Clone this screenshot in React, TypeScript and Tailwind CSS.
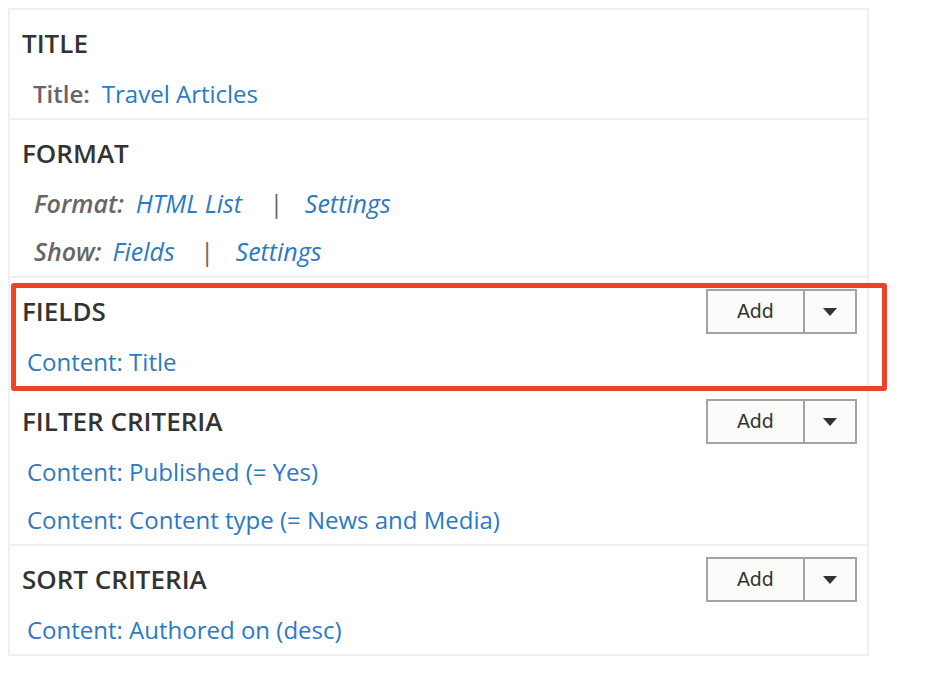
import React from 'react';

const font = { fontFamily: '"Open Sans", "Liberation Sans", sans-serif' };

function AddButton() {
  return (
    <div className="flex h-[45px] border-2 border-[#a3a3a3] bg-[#fbfbf9]">
      <div
        className="flex w-[97px] items-center justify-center border-r-2 border-[#a3a3a3] text-[19px] text-[#333]"
        style={{ fontFamily: '"DejaVu Sans", "Liberation Sans", sans-serif' }}
      >
        Add
      </div>
      <div className="flex w-[50px] items-center justify-center">
        <svg width="14" height="8" viewBox="0 0 14 8">
          <path d="M0 0h14L7 8z" fill="#333" />
        </svg>
      </div>
    </div>
  );
}

function Section({
  title,
  add,
  last,
  children,
}: {
  title: string;
  add?: boolean;
  last?: boolean;
  children: React.ReactNode;
}) {
  return (
    <div className={`pt-[11px] ${last ? '' : 'border-b-2 border-[#f0f0f0]'}`}>
      <div className="flex h-[45px] items-center justify-between pl-[12px] pr-[10px]">
        <h2 className="text-[26px] font-semibold text-[#333]">{title}</h2>
        {add && <AddButton />}
      </div>
      <div className="mt-[4px]">{children}</div>
    </div>
  );
}

function Row({
  children,
  indent = 'pl-[17px]',
  size = 'text-[24px]',
}: {
  children: React.ReactNode;
  indent?: string;
  size?: string;
}) {
  return <div className={`flex h-[48px] items-center ${size} ${indent}`}>{children}</div>;
}

const link = 'text-[#2a7ac4]';
const label = 'font-semibold text-[#666]';

export default function App() {
  return (
    <div className="min-h-[680px] bg-white p-[8px]" style={font}>
      <div className="relative w-[861px] border-2 border-[#f0f0f0]">
        <Section title="TITLE">
          <Row indent="pl-[23px]">
            <span className={label}>Title:</span>
            <span className={`${link} ml-[12px]`}>Travel Articles</span>
          </Row>
        </Section>

        <Section title="FORMAT">
          <Row indent="pl-[24px]" size="text-[25px]">
            <span className={`${label} italic`}>Format:</span>
            <span className={`${link} ml-[12px] italic`}>HTML List</span>
            <span className="ml-[27px] italic text-[#666]">|</span>
            <span className={`${link} ml-[22px] italic`}>Settings</span>
          </Row>
          <Row indent="pl-[24px]" size="text-[25px]">
            <span className={`${label} italic`}>Show:</span>
            <span className={`${link} ml-[11px] italic`}>Fields</span>
            <span className="ml-[25px] italic text-[#666]">|</span>
            <span className={`${link} ml-[22px] italic`}>Settings</span>
          </Row>
        </Section>

        <Section title="FIELDS" add>
          <Row>
            <span className={link}>Content: Title</span>
          </Row>
        </Section>

        <Section title="FILTER CRITERIA" add>
          <Row>
            <span className={link}>Content: Published (= Yes)</span>
          </Row>
          <Row>
            <span className={link}>Content: Content type (= News and Media)</span>
          </Row>
        </Section>

        <Section title="SORT CRITERIA" add last>
          <Row>
            <span className={link}>Content: Authored on (desc)</span>
          </Row>
        </Section>

        {/* highlight */}
        <div className="absolute left-[1px] top-[273px] h-[108px] w-[876px] rounded-[3px] border-[5px] border-[#eb4228]" />
      </div>
    </div>
  );
}
